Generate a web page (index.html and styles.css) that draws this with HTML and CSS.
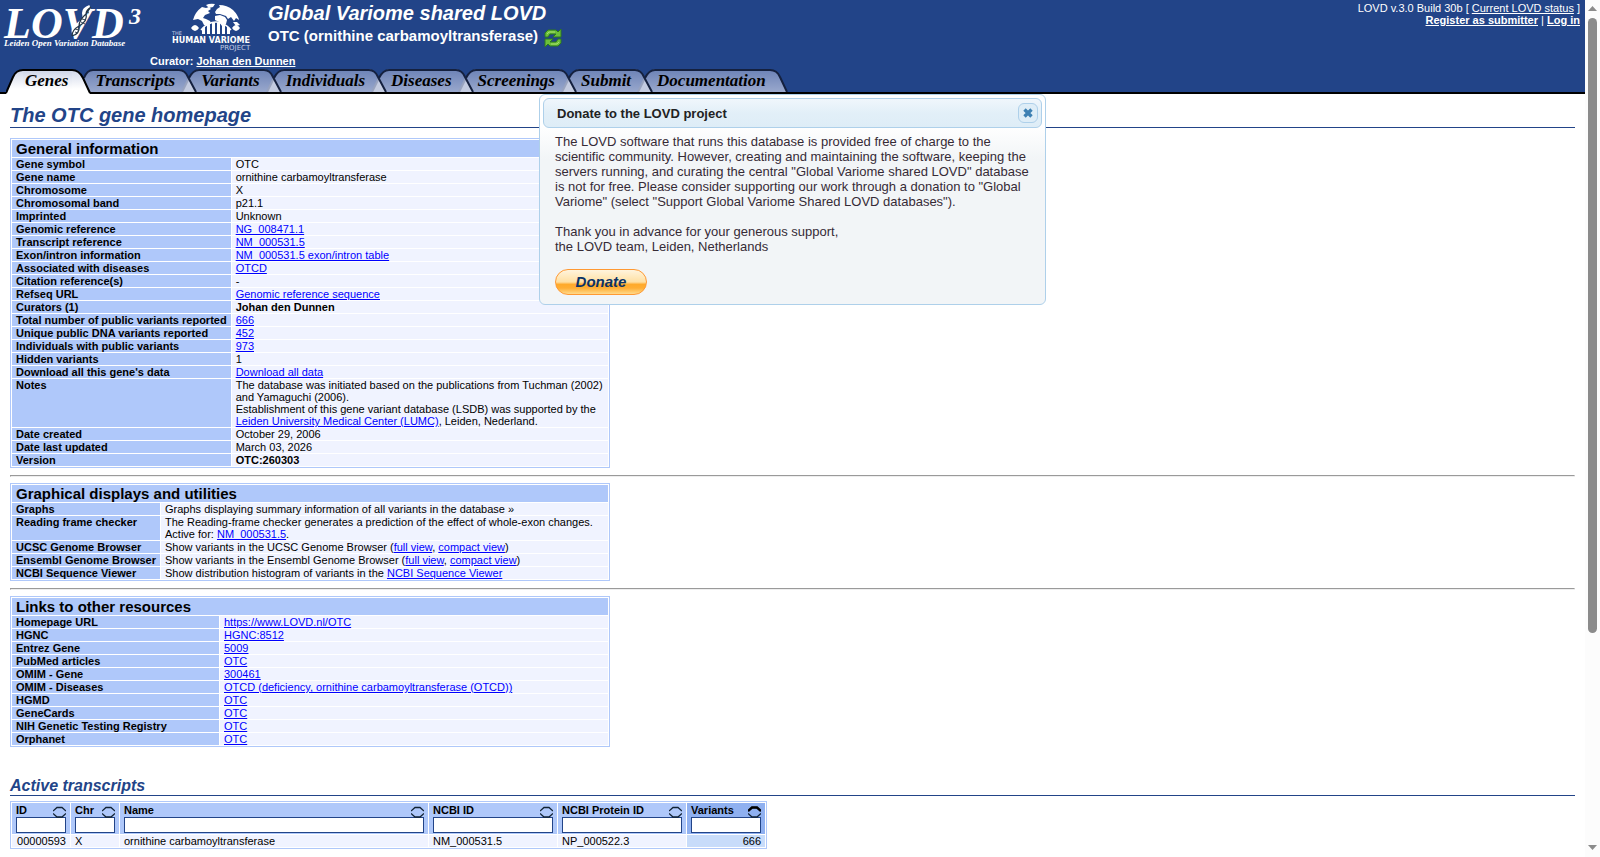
FILE: index.html
```
<!DOCTYPE html>
<html lang="en">
<head>
  <meta charset="UTF-8">
  <meta name="viewport" content="width=device-width, initial-scale=1.0">
  <title>The OTC gene homepage - Global Variome shared LOVD</title>
  <link rel="stylesheet" href="styles.css">
</head>
<body>
  <!-- Shapes used more than once -->
  <svg class="defs" width="0" height="0" aria-hidden="true">
    <defs>
      <linearGradient id="tab-fill" x1="0" y1="0" x2="0" y2="23" gradientUnits="userSpaceOnUse">
        <stop offset="0" stop-color="#6b81b5"/>
        <stop offset="1" stop-color="#99a8cd"/>
      </linearGradient>
      <linearGradient id="tab-fill-on" x1="0" y1="0" x2="0" y2="25" gradientUnits="userSpaceOnUse">
        <stop offset="0" stop-color="#cfd6e8"/>
        <stop offset="0.8" stop-color="#ffffff"/>
      </linearGradient>
      <symbol id="join" viewBox="0 0 20 23">
        <path d="M0 0H1Q6 2 10 9Q14 2 19 0H20V23H0Z" fill="url(#tab-fill)"/>
        <path d="M1 0Q7 2 10 8Q13 2 19 0Z" fill="#224488"/>
        <path d="M10 9L17 23H3Z" fill="#c3cbe0"/>
        <path d="M3 23L10 9" fill="none" stroke="#98a3bf" stroke-width="2"/>
        <path d="M10 9Q14 1 20 1" fill="none" stroke="#15213f" stroke-width="2"/>
        <path d="M0 1Q6 1 9 8L17 23" fill="none" stroke="#15213f" stroke-width="2"/>
      </symbol>
      <symbol id="sort" viewBox="0 0 13 12">
        <path d="M0 5L4 1.5H9L13 5M0 7.500L4 11H9L13 7.500" fill="none" stroke="#123" stroke-width="1.3"/>
      </symbol>
    </defs>
  </svg>

  <div class="page">
    <header>
      <div class="banner">
        <a href="#" class="logo" aria-label="LOVD 3">
          <svg width="145" height="52" viewBox="0 0 145 52">
            <text x="4" y="37" font-size="44" class="logo-text">LOVD</text>
            <path d="M74 33Q72 27 79 23Q86 18 84 12Q84 8 90 6" fill="none" stroke="#fff" stroke-width="4"/>
            <path d="M72 35Q72 29 79 25Q88 20 86 13Q86 9 91 6M72 35Q80 33 79 25Q79 19 86 13Q88 10 91 6" fill="none" stroke="#234" stroke-width="1.2"/>
            <path d="M75 31l3 1M75 28l4 1M81 21l4 2M82 18l4 1M87 11l2 1" stroke="#345" stroke-width="1"/>
            <text x="129" y="23" font-size="24" class="logo-text">3</text>
            <text x="4" y="45" font-size="9" class="logo-text">Leiden Open Variation Database</text>
          </svg>
        </a>
        <a href="#" class="hvp" aria-label="The Human Variome Project">
          <svg width="84" height="54" viewBox="0 0 84 54">
            <!-- continents -->
            <path d="M22 20Q24 12 31 7L35 8L38 7L40 9L37 11L39 13L34 15L32 18L35 19L39 21L40 23L37 26L33 25L31 21L27 19Z" fill="#fff"/>
            <path d="M35 5Q39 3 44 4L42 7L38 8Z" fill="#fff"/>
            <path d="M46 9L49 7L48 5Q56 5 62 10Q67 15 68 20L65 18L63 21L60 17L57 19L55 16L52 15L49 14L45 14L44 12Z" fill="#fff"/>
            <path d="M44 16L49 15L54 17L56 20L55 24L51 26L48 22L44 20Z" fill="#fff"/>
            <path d="M62 22L66 22L69 25L65 26Z" fill="#fff"/>
            <!-- DNA strand -->
            <path d="M20 28Q24 22 28 28Q24 34 20 28ZM61 28Q65 22 69 28Q65 34 61 28Z" fill="#fff"/>
            <path d="M30 30Q37 22 45 22Q53 22 60 30" fill="none" stroke="#fff" stroke-width="1.5"/>
            <path d="M31 34V28L34 26V34ZM36 34V25L39 24V34ZM41 34V23H44V34ZM46 34V23H49V34ZM51 34V24L54 25V34ZM56 34V26L59 28V34Z" fill="#fff"/>
            <text x="1" y="35" font-size="5" class="hvp-text">THE</text>
            <text x="1" y="43" font-size="8" class="hvp-text hvp-bold">HUMAN VARIOME</text>
            <text x="49" y="50" font-size="7" class="hvp-text">PROJECT</text>
          </svg>
        </a>
        <div class="titles">
          <h1>Global Variome shared LOVD</h1>
          <div class="gene">
            OTC (ornithine carbamoyltransferase)
            <button type="button" class="switch" aria-label="Switch gene">
              <svg width="20" height="20" viewBox="0 0 20 20">
                <path d="M2 9V5L5 2H13L15 4L18 1V9H10L13 6H7L5 9Z" fill="#6cbf3a" stroke="#2d7a1c"/>
                <path d="M18 11V15L15 18H7L5 16L2 19V11H10L7 14H13L15 11Z" fill="#6cbf3a" stroke="#2d7a1c"/>
                <path d="M4 6L6 4H12M16 14L14 16H8" fill="none" stroke="#a5e070"/>
              </svg>
            </button>
          </div>
        </div>
        <div class="account">
          LOVD v.3.0 Build 30b [ <a href="#">Current LOVD status</a> ]<br>
          <a href="#"><b>Register as submitter</b></a> | <a href="#"><b>Log in</b></a>
        </div>
      </div>
      <div class="curator">Curator: <a href="#">Johan den Dunnen</a></div>
      <nav class="tabs">
        <svg class="edge-on" width="17" height="25"><path d="M0 25L7 8Q10 1 17 1V25Z" fill="url(#tab-fill-on)"/><path d="M0 24L7 8Q10 1 17 1" fill="none" stroke="#000" stroke-width="2"/></svg>
        <a href="#" class="tab tab-on">Genes</a>
        <svg class="edge-on" width="21" height="25"><path d="M12 9Q15 1 21 1V23H17Z" fill="url(#tab-fill)"/><path d="M0 1Q7 1 11 10L18 25H0Z" fill="url(#tab-fill-on)"/><path d="M12 9Q15 1 21 1" fill="none" stroke="#15213f" stroke-width="2"/><path d="M0 1Q7 1 11 9L18 24" fill="none" stroke="#000" stroke-width="2"/></svg>
        <a href="#" class="tab">Transcripts</a>
        <svg width="20" height="23"><use href="#join"/></svg>
        <a href="#" class="tab">Variants</a>
        <svg width="20" height="23"><use href="#join"/></svg>
        <a href="#" class="tab">Individuals</a>
        <svg width="20" height="23"><use href="#join"/></svg>
        <a href="#" class="tab">Diseases</a>
        <svg width="20" height="23"><use href="#join"/></svg>
        <a href="#" class="tab">Screenings</a>
        <svg width="20" height="23"><use href="#join"/></svg>
        <a href="#" class="tab">Submit</a>
        <svg width="20" height="23"><use href="#join"/></svg>
        <a href="#" class="tab">Documentation</a>
        <svg width="18" height="23"><path d="M0 1Q7 1 10 9L17 23H0Z" fill="url(#tab-fill)"/><path d="M0 1Q7 1 10 8L17 23" fill="none" stroke="#15213f" stroke-width="2"/></svg>
      </nav>
    </header>

    <main>
      <h2>The OTC gene homepage</h2>

      <table class="data">
        <tr><th colspan="2" class="caption">General information</th></tr>
        <tr><th>Gene symbol</th><td>OTC</td></tr>
        <tr><th>Gene name</th><td>ornithine carbamoyltransferase</td></tr>
        <tr><th>Chromosome</th><td>X</td></tr>
        <tr><th>Chromosomal band</th><td>p21.1</td></tr>
        <tr><th>Imprinted</th><td>Unknown</td></tr>
        <tr><th>Genomic reference</th><td><a href="#">NG_008471.1</a></td></tr>
        <tr><th>Transcript reference</th><td><a href="#">NM_000531.5</a></td></tr>
        <tr><th>Exon/intron information</th><td><a href="#">NM_000531.5 exon/intron table</a></td></tr>
        <tr><th>Associated with diseases</th><td><a href="#">OTCD</a></td></tr>
        <tr><th>Citation reference(s)</th><td>-</td></tr>
        <tr><th>Refseq URL</th><td><a href="#">Genomic reference sequence</a></td></tr>
        <tr><th>Curators (1)</th><td><b>Johan den Dunnen</b></td></tr>
        <tr><th>Total number of public variants reported</th><td><a href="#">666</a></td></tr>
        <tr><th>Unique public DNA variants reported</th><td><a href="#">452</a></td></tr>
        <tr><th>Individuals with public variants</th><td><a href="#">973</a></td></tr>
        <tr><th>Hidden variants</th><td>1</td></tr>
        <tr><th>Download all this gene's data</th><td><a href="#">Download all data</a></td></tr>
        <tr><th>Notes</th><td>The database was initiated based on the publications from Tuchman (2002) and Yamaguchi (2006).<br>Establishment of this gene variant database (LSDB) was supported by the <a href="#">Leiden University Medical Center (LUMC)</a>, Leiden, Nederland.</td></tr>
        <tr><th>Date created</th><td>October 29, 2006</td></tr>
        <tr><th>Date last updated</th><td>March 03, 2026</td></tr>
        <tr><th>Version</th><td><b>OTC:260303</b></td></tr>
      </table>

      <hr>

      <table class="data">
        <tr><th colspan="2" class="caption">Graphical displays and utilities</th></tr>
        <tr><th>Graphs</th><td>Graphs displaying summary information of all variants in the database &raquo;</td></tr>
        <tr><th>Reading frame checker</th><td>The Reading-frame checker generates a prediction of the effect of whole-exon changes.<br>Active for: <a href="#">NM_000531.5</a>.</td></tr>
        <tr><th>UCSC Genome Browser</th><td>Show variants in the UCSC Genome Browser (<a href="#">full view</a>, <a href="#">compact view</a>)</td></tr>
        <tr><th>Ensembl Genome Browser</th><td>Show variants in the Ensembl Genome Browser (<a href="#">full view</a>, <a href="#">compact view</a>)</td></tr>
        <tr><th>NCBI Sequence Viewer</th><td>Show distribution histogram of variants in the <a href="#">NCBI Sequence Viewer</a></td></tr>
      </table>

      <hr>

      <table class="data resources">
        <tr><th colspan="2" class="caption">Links to other resources</th></tr>
        <tr><th class="label">Homepage URL</th><td><a href="#">https://www.LOVD.nl/OTC</a></td></tr>
        <tr><th>HGNC</th><td><a href="#">HGNC:8512</a></td></tr>
        <tr><th>Entrez Gene</th><td><a href="#">5009</a></td></tr>
        <tr><th>PubMed articles</th><td><a href="#">OTC</a></td></tr>
        <tr><th>OMIM - Gene</th><td><a href="#">300461</a></td></tr>
        <tr><th>OMIM - Diseases</th><td><a href="#">OTCD (deficiency, ornithine carbamoyltransferase (OTCD))</a></td></tr>
        <tr><th>HGMD</th><td><a href="#">OTC</a></td></tr>
        <tr><th>GeneCards</th><td><a href="#">OTC</a></td></tr>
        <tr><th>NIH Genetic Testing Registry</th><td><a href="#">OTC</a></td></tr>
        <tr><th>Orphanet</th><td><a href="#">OTC</a></td></tr>
      </table>

      <h3>Active transcripts</h3>

      <table class="list">
        <thead>
          <tr>
            <th class="w-id"><label for="s-id">ID <svg width="13" height="12"><use href="#sort"/></svg></label><input type="text" id="s-id"></th>
            <th class="w-chr"><label for="s-chr">Chr <svg width="13" height="12"><use href="#sort"/></svg></label><input type="text" id="s-chr"></th>
            <th class="w-name"><label for="s-name">Name <svg width="13" height="12"><use href="#sort"/></svg></label><input type="text" id="s-name"></th>
            <th class="w-ncbi"><label for="s-ncbi">NCBI ID <svg width="13" height="12"><use href="#sort"/></svg></label><input type="text" id="s-ncbi"></th>
            <th class="w-ncbi"><label for="s-prot">NCBI Protein ID <svg width="13" height="12"><use href="#sort"/></svg></label><input type="text" id="s-prot"></th>
            <th class="w-var ordered"><label for="s-var">Variants <svg width="13" height="12"><use href="#sort"/><path d="M0 5L4 1.500H9L13 5" fill="none" stroke="#000" stroke-width="2.400"/></svg></label><input type="text" id="s-var"></th>
          </tr>
        </thead>
        <tbody>
          <tr>
            <td class="num">00000593</td>
            <td>X</td>
            <td>ornithine carbamoyltransferase</td>
            <td>NM_000531.5</td>
            <td>NP_000522.3</td>
            <td class="num ordered">666</td>
          </tr>
        </tbody>
      </table>
    </main>

    <div class="dialog" role="dialog" aria-labelledby="dialog-title">
      <div class="dialog-bar">
        <span id="dialog-title">Donate to the LOVD project</span>
        <button type="button" class="close" aria-label="Close">
          <svg width="10" height="10" viewBox="0 0 10 10"><path d="M1.500 1.500L8.500 8.500M8.500 1.500L1.500 8.500" stroke="#3d80b3" stroke-width="3.400"/></svg>
        </button>
      </div>
      <div class="dialog-body">
        <p>The LOVD software that runs this database is provided free of charge to the scientific community. However, creating and maintaining the software, keeping the servers running, and curating the central "Global Variome shared LOVD" database is not for free. Please consider supporting our work through a donation to "Global Variome" (select "Support Global Variome Shared LOVD databases").</p>
        <p>Thank you in advance for your generous support,<br>the LOVD team, Leiden, Netherlands</p>
        <button type="button" class="donate">Donate</button>
      </div>
    </div>
  </div>

  <div class="scrollbar" aria-hidden="true">
    <svg width="9" height="5"><path d="M0 5L4.500 0L9 5Z" fill="#8b8b8b"/></svg>
    <div class="track"><div class="thumb"></div></div>
    <svg width="9" height="5"><path d="M0 0H9L4.500 5Z" fill="#8b8b8b"/></svg>
  </div>
</body>
</html>
```
FILE: styles.css
```
/* Page */
* {
  box-sizing: border-box;
}
body {
  display: flex;
  height: 100vh;
  margin: 0;
  overflow: hidden;
  background: #fff;
  color: #000;
  font-family: "Liberation Sans", Arial, sans-serif;
  font-size: 11px;
  line-height: 12px;
}
a {
  color: #0000ff;
}
button {
  font-family: inherit;
  cursor: pointer;
}
.defs {
  position: absolute;
}
.page {
  position: relative;
  flex: 1;
  min-width: 0;
  overflow: hidden;
}

/* Header */
header {
  background: #224488;
  color: #fff;
  border-bottom: 2px solid #000;
}
header a {
  color: #fff;
}
.banner {
  display: flex;
  height: 54px;
}
.banner svg {
  display: block;
  overflow: visible;
}
.logo {
  width: 171px;
  padding-top: 1px;
}
.hvp {
  width: 97px;
}
.logo-text {
  fill: #fff;
  font-family: "Liberation Serif", "Times New Roman", serif;
  font-style: italic;
  font-weight: bold;
}
.hvp-text {
  fill: #c3cde2;
  font-family: "DejaVu Sans", sans-serif;
}
.hvp-bold {
  fill: #fff;
  font-weight: bold;
}
.titles {
  flex: 1;
  padding-top: 2px;
}
h1 {
  margin: 0;
  font-size: 20px;
  font-style: italic;
  line-height: 23px;
}
.gene {
  display: flex;
  align-items: center;
  gap: 5px;
  height: 22px;
  font-size: 15px;
  font-weight: bold;
}
.switch {
  padding: 3px 0 0;
  border: 0;
  background: none;
}
.account {
  padding: 2px 5px 0 0;
  text-align: right;
}
.curator {
  height: 15px;
  padding: 1px 0 0 150px;
  font-weight: bold;
}

/* Tabs */
.tabs {
  display: flex;
  padding-left: 6px;
}
.tabs svg {
  display: block;
}
.tab {
  height: 23px;
  padding: 0 4px 0 2px;
  border-top: 2px solid #15213f;
  background: linear-gradient(#6f85b8, #99a8cd);
  font: italic bold 17px/20px "Liberation Serif", "Times New Roman", serif;
  text-decoration: none;
}
header .tab {
  color: #000;
}
.tab-on, .edge-on {
  height: 25px;
  margin-bottom: -2px;
}
.tab-on {
  border-top-color: #000;
  background: linear-gradient(#cfd6e8, #fff 80%);
}

/* Content */
main {
  padding: 10px 10px 0;
}
h2, h3 {
  margin: 0;
  color: #224488;
  border-bottom: 1px solid #224488;
  font-style: italic;
}
h2 {
  margin-bottom: 10px;
  font-size: 20px;
  line-height: 23px;
}
h3 {
  margin: 30px 0 5px;
  font-size: 16px;
  line-height: 18px;
}
hr {
  margin: 7px 0 6px;
}
.data, .list {
  border: 1px solid #afc8fa;
  border-spacing: 1px;
}
.data {
  width: 600px;
}
th, td {
  padding: 0 4px;
  text-align: left;
  vertical-align: top;
}
th {
  background: #afc8fa;
  white-space: nowrap;
}
td {
  background: #f0f3ff;
}
.data td {
  width: 100%;
}
.data .caption {
  font-size: 15px;
  line-height: 17px;
}
.resources td {
  width: auto;
}
.resources .label {
  width: 207px;
}

/* Transcript list */
.list {
  table-layout: fixed;
}
.list label {
  display: flex;
  justify-content: space-between;
  height: 14px;
  padding-top: 1px;
}
.list label svg {
  margin-top: 2px;
}
.list input {
  display: block;
  width: 100%;
  height: 16px;
  margin-bottom: 1px;
  padding: 0 2px;
  border: 1px solid #224488;
  background: #fff;
  font-size: 11px;
}
.w-id {
  width: 58px;
}
.w-chr {
  width: 48px;
}
.w-name {
  width: 308px;
}
.w-ncbi {
  width: 128px;
}
.w-var {
  width: 78px;
}
.num {
  text-align: right;
}
th.ordered {
  background: #8fb0f0;
}
td.ordered {
  background: #c8dcfa;
}

/* Donation dialog, lies over the page */
.dialog {
  position: absolute;
  top: 94px;
  left: 0;
  right: 0;
  width: 507px;
  margin: 0 auto;
  padding: 3px 3px 2px;
  border: 1px solid #aed0ea;
  border-radius: 6px;
  background: linear-gradient(#fff, #fff 30px, #f2f5f7 64px);
  color: #362b36;
  font-size: 13px;
  line-height: 15px;
}
.dialog-bar {
  display: flex;
  align-items: center;
  justify-content: space-between;
  height: 30px;
  padding: 0 3px 0 13px;
  border: 1px solid #aed0ea;
  border-radius: 6px;
  background: linear-gradient(#f0f6fc, #e2eff8 50%, #deedf7);
  color: #222;
  font-weight: bold;
}
.close {
  display: flex;
  align-items: center;
  justify-content: center;
  width: 20px;
  height: 20px;
  padding: 0;
  border: 1px solid #aed0ea;
  border-radius: 6px;
  background: #deedf7;
}
.dialog-body {
  padding: 6px 10px 7px 12px;
}
.dialog-body p {
  margin: 0 0 15px;
}
.donate {
  display: block;
  width: 92px;
  height: 26px;
  padding: 0 0 1px;
  border: 1px solid #ff9933;
  border-radius: 13px;
  background: linear-gradient(#fff4dd, #ffe0a3 50%, #ffaa2b 60%, #ffae33 75%, #ffd98c);
  color: #0b3366;
  font-size: 15px;
  font-style: italic;
  font-weight: bold;
}

/* Scrollbar */
.scrollbar {
  display: flex;
  flex-direction: column;
  align-items: center;
  gap: 7px;
  width: 15px;
  padding: 6px 0 7px;
  background: #fcfcfc;
}
.track {
  flex: 1;
}
.thumb {
  width: 9px;
  height: 75%;
  border-radius: 5px;
  background: #8b8b8b;
}
```
